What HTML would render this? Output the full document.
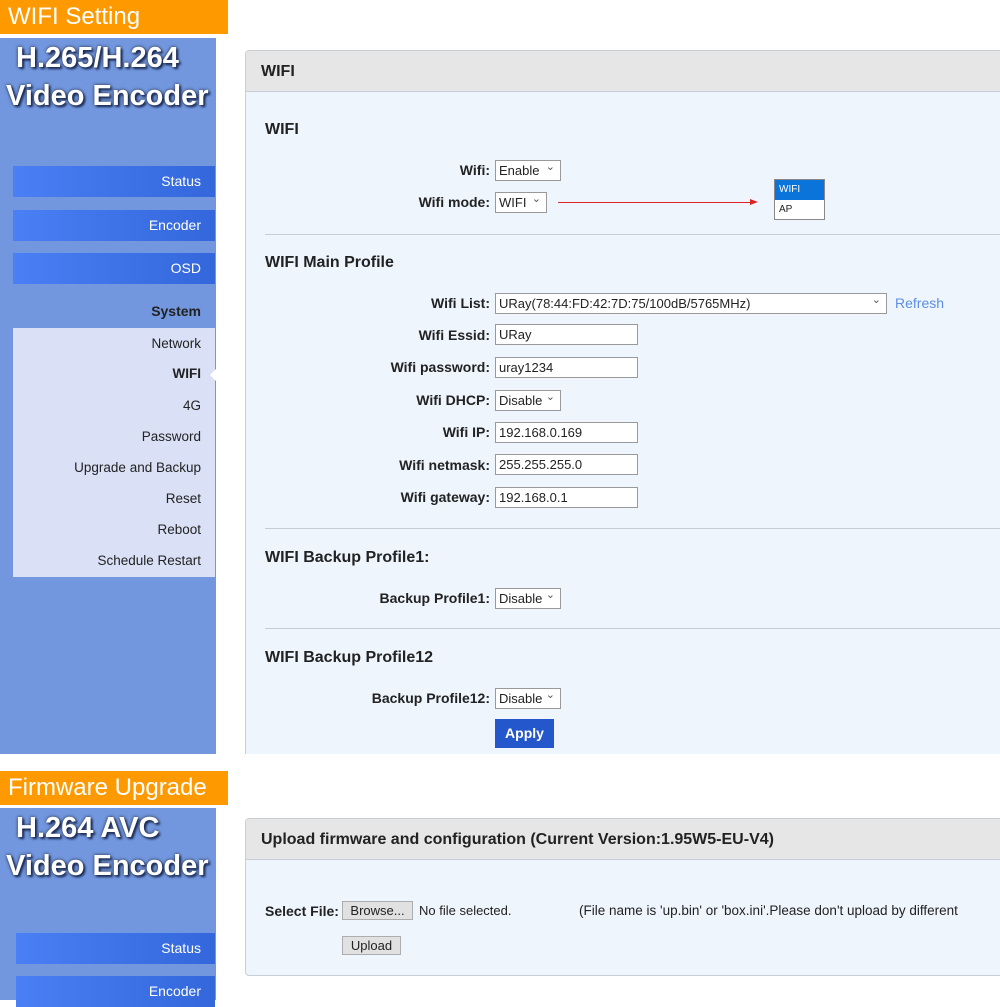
<!DOCTYPE html>
<html><head><meta charset="utf-8"><style>
*{margin:0;padding:0;box-sizing:border-box}
body{width:1000px;height:1000px;background:#fff;position:relative;overflow:hidden;font-family:"Liberation Sans",Arial,sans-serif;color:#222}
.a{position:absolute}
.orange{background:#ff9900;color:#fff;font-size:24px;padding-left:8px;line-height:34px;height:34px;width:228px}
.side{background:#7297de}
.logo{color:#fff;font-weight:900;font-size:29px;text-shadow:2px 2px 2px #1a2b55,0 0 3px #223;letter-spacing:0px;white-space:nowrap}
.nb{left:13px;width:202px;height:31px;background:linear-gradient(90deg,#4a7ff5,#3367db);color:#fff;font-size:14px;text-align:right;padding-right:14px;line-height:31px}
.sub{font-size:13.5px;right:799px;text-align:right;white-space:nowrap}
.panel{border:1px solid #c9ced6;border-radius:4px;background:#eef5fd;overflow:hidden}
.ph{background:#e6e6e6;border-bottom:1px solid #c9ced6;font-weight:bold;font-size:16px;padding-left:15px}
.h{font-weight:bold;font-size:16px;left:265px}
.l{font-weight:bold;font-size:14px;right:510px;white-space:nowrap;line-height:18px}
.in{left:495px;height:21px;border:1px solid #999;background:#fff;font-size:13px;line-height:19px;padding-left:3px;white-space:nowrap}
.sel::after{content:"⌄";position:absolute;right:5px;top:-3px;font-size:11px;color:#555}
.hr{left:265px;right:0;height:1px;background:#c8ccd3}
.btn{background:#e1e1e1;border:1px solid #adadad;font-size:13px;text-align:center;line-height:17px;height:19px}
</style></head><body>

<div class="a orange" style="left:0;top:0">WIFI Setting</div>
<div class="a side" style="left:0;top:38px;width:216px;height:716px"></div>
<div class="a logo" style="left:16px;top:42px">H.265/H.264</div>
<div class="a logo" style="left:6px;top:80px">Video Encoder</div>
<div class="a nb" style="top:166px">Status</div>
<div class="a nb" style="top:210px">Encoder</div>
<div class="a nb" style="top:253px">OSD</div>
<div class="a" style="right:799px;top:303px;font-weight:bold;font-size:14px;color:#222">System</div>
<div class="a" style="left:13px;top:328px;width:202px;height:249px;background:#dae1f6"></div>
<div class="a sub" style="top:336px">Network</div>
<div class="a sub" style="top:366px;font-weight:bold">WIFI</div>
<div class="a" style="left:210px;top:369px;width:0;height:0;border-top:6px solid transparent;border-bottom:6px solid transparent;border-right:6px solid #fff"></div>
<div class="a sub" style="top:398px">4G</div>
<div class="a sub" style="top:429px">Password</div>
<div class="a sub" style="top:460px">Upgrade and Backup</div>
<div class="a sub" style="top:491px">Reset</div>
<div class="a sub" style="top:522px">Reboot</div>
<div class="a sub" style="top:553px">Schedule Restart</div>

<div class="a panel" style="left:245px;top:50px;width:770px;height:720px">
<div class="ph" style="height:41px;line-height:41px">WIFI</div></div>

<div class="a h" style="top:121px">WIFI</div>
<div class="a l" style="top:161px">Wifi:</div>
<div class="a in sel" style="top:160px;width:66px">Enable</div>
<div class="a l" style="top:193px">Wifi mode:</div>
<div class="a in sel" style="top:192px;width:52px">WIFI</div>
<div class="a" style="left:558px;top:202px;width:192px;height:1px;background:#d22"></div>
<div class="a" style="left:750px;top:199px;border-top:3px solid transparent;border-bottom:3px solid transparent;border-left:8px solid #d22"></div>
<div class="a" style="left:774px;top:179px;width:51px;height:41px;border:1px solid #888;background:#fff;font-size:10px">
<div style="background:#0a74da;color:#fff;height:20px;line-height:20px;padding-left:4px">WIFI</div>
<div style="line-height:20px;padding-left:4px">AP</div></div>
<div class="a hr" style="top:234px"></div>

<div class="a h" style="top:254px">WIFI Main Profile</div>
<div class="a l" style="top:294px">Wifi List:</div>
<div class="a in sel" style="top:293px;width:392px">URay(78:44:FD:42:7D:75/100dB/5765MHz)</div>
<div class="a" style="left:895px;top:295px;font-size:14px;color:#5b8ee6">Refresh</div>
<div class="a l" style="top:326px">Wifi Essid:</div>
<div class="a in" style="top:324px;width:143px">URay</div>
<div class="a l" style="top:358px">Wifi password:</div>
<div class="a in" style="top:357px;width:143px">uray1234</div>
<div class="a l" style="top:391px">Wifi DHCP:</div>
<div class="a in sel" style="top:390px;width:66px">Disable</div>
<div class="a l" style="top:423px">Wifi IP:</div>
<div class="a in" style="top:422px;width:143px">192.168.0.169</div>
<div class="a l" style="top:456px">Wifi netmask:</div>
<div class="a in" style="top:454px;width:143px">255.255.255.0</div>
<div class="a l" style="top:488px">Wifi gateway:</div>
<div class="a in" style="top:487px;width:143px">192.168.0.1</div>
<div class="a hr" style="top:528px"></div>

<div class="a h" style="top:549px">WIFI Backup Profile1:</div>
<div class="a l" style="top:589px">Backup Profile1:</div>
<div class="a in sel" style="top:588px;width:66px">Disable</div>
<div class="a hr" style="top:628px"></div>
<div class="a h" style="top:649px">WIFI Backup Profile12</div>
<div class="a l" style="top:689px">Backup Profile12:</div>
<div class="a in sel" style="top:688px;width:66px">Disable</div>
<div class="a" style="left:495px;top:719px;width:59px;height:29px;background:#2456cc;color:#fff;font-weight:bold;font-size:14px;text-align:center;line-height:29px">Apply</div>

<div class="a" style="left:0;top:754px;width:1000px;height:17px;background:#fff"></div>
<div class="a orange" style="left:0;top:771px">Firmware Upgrade</div>
<div class="a side" style="left:0;top:808px;width:216px;height:192px"></div>
<div class="a logo" style="left:16px;top:812px">H.264 AVC</div>
<div class="a logo" style="left:6px;top:850px">Video Encoder</div>
<div class="a nb" style="left:16px;width:199px;top:933px">Status</div>
<div class="a nb" style="left:16px;width:199px;top:976px">Encoder</div>

<div class="a panel" style="left:245px;top:818px;width:770px;height:158px">
<div class="ph" style="height:41px;line-height:41px">Upload firmware and configuration (Current Version:1.95W5-EU-V4)</div></div>
<div class="a" style="left:265px;top:903px;font-weight:bold;font-size:14px">Select File:</div>
<div class="a btn" style="left:342px;top:901px;width:71px">Browse...</div>
<div class="a" style="left:419px;top:903px;font-size:13px">No file selected.</div>
<div class="a" style="left:579px;top:903px;font-size:13.5px;white-space:nowrap;width:379px;overflow:hidden">(File name is 'up.bin' or 'box.ini'.Please don't upload by different</div>
<div class="a btn" style="left:342px;top:936px;width:59px">Upload</div>
</body></html>
